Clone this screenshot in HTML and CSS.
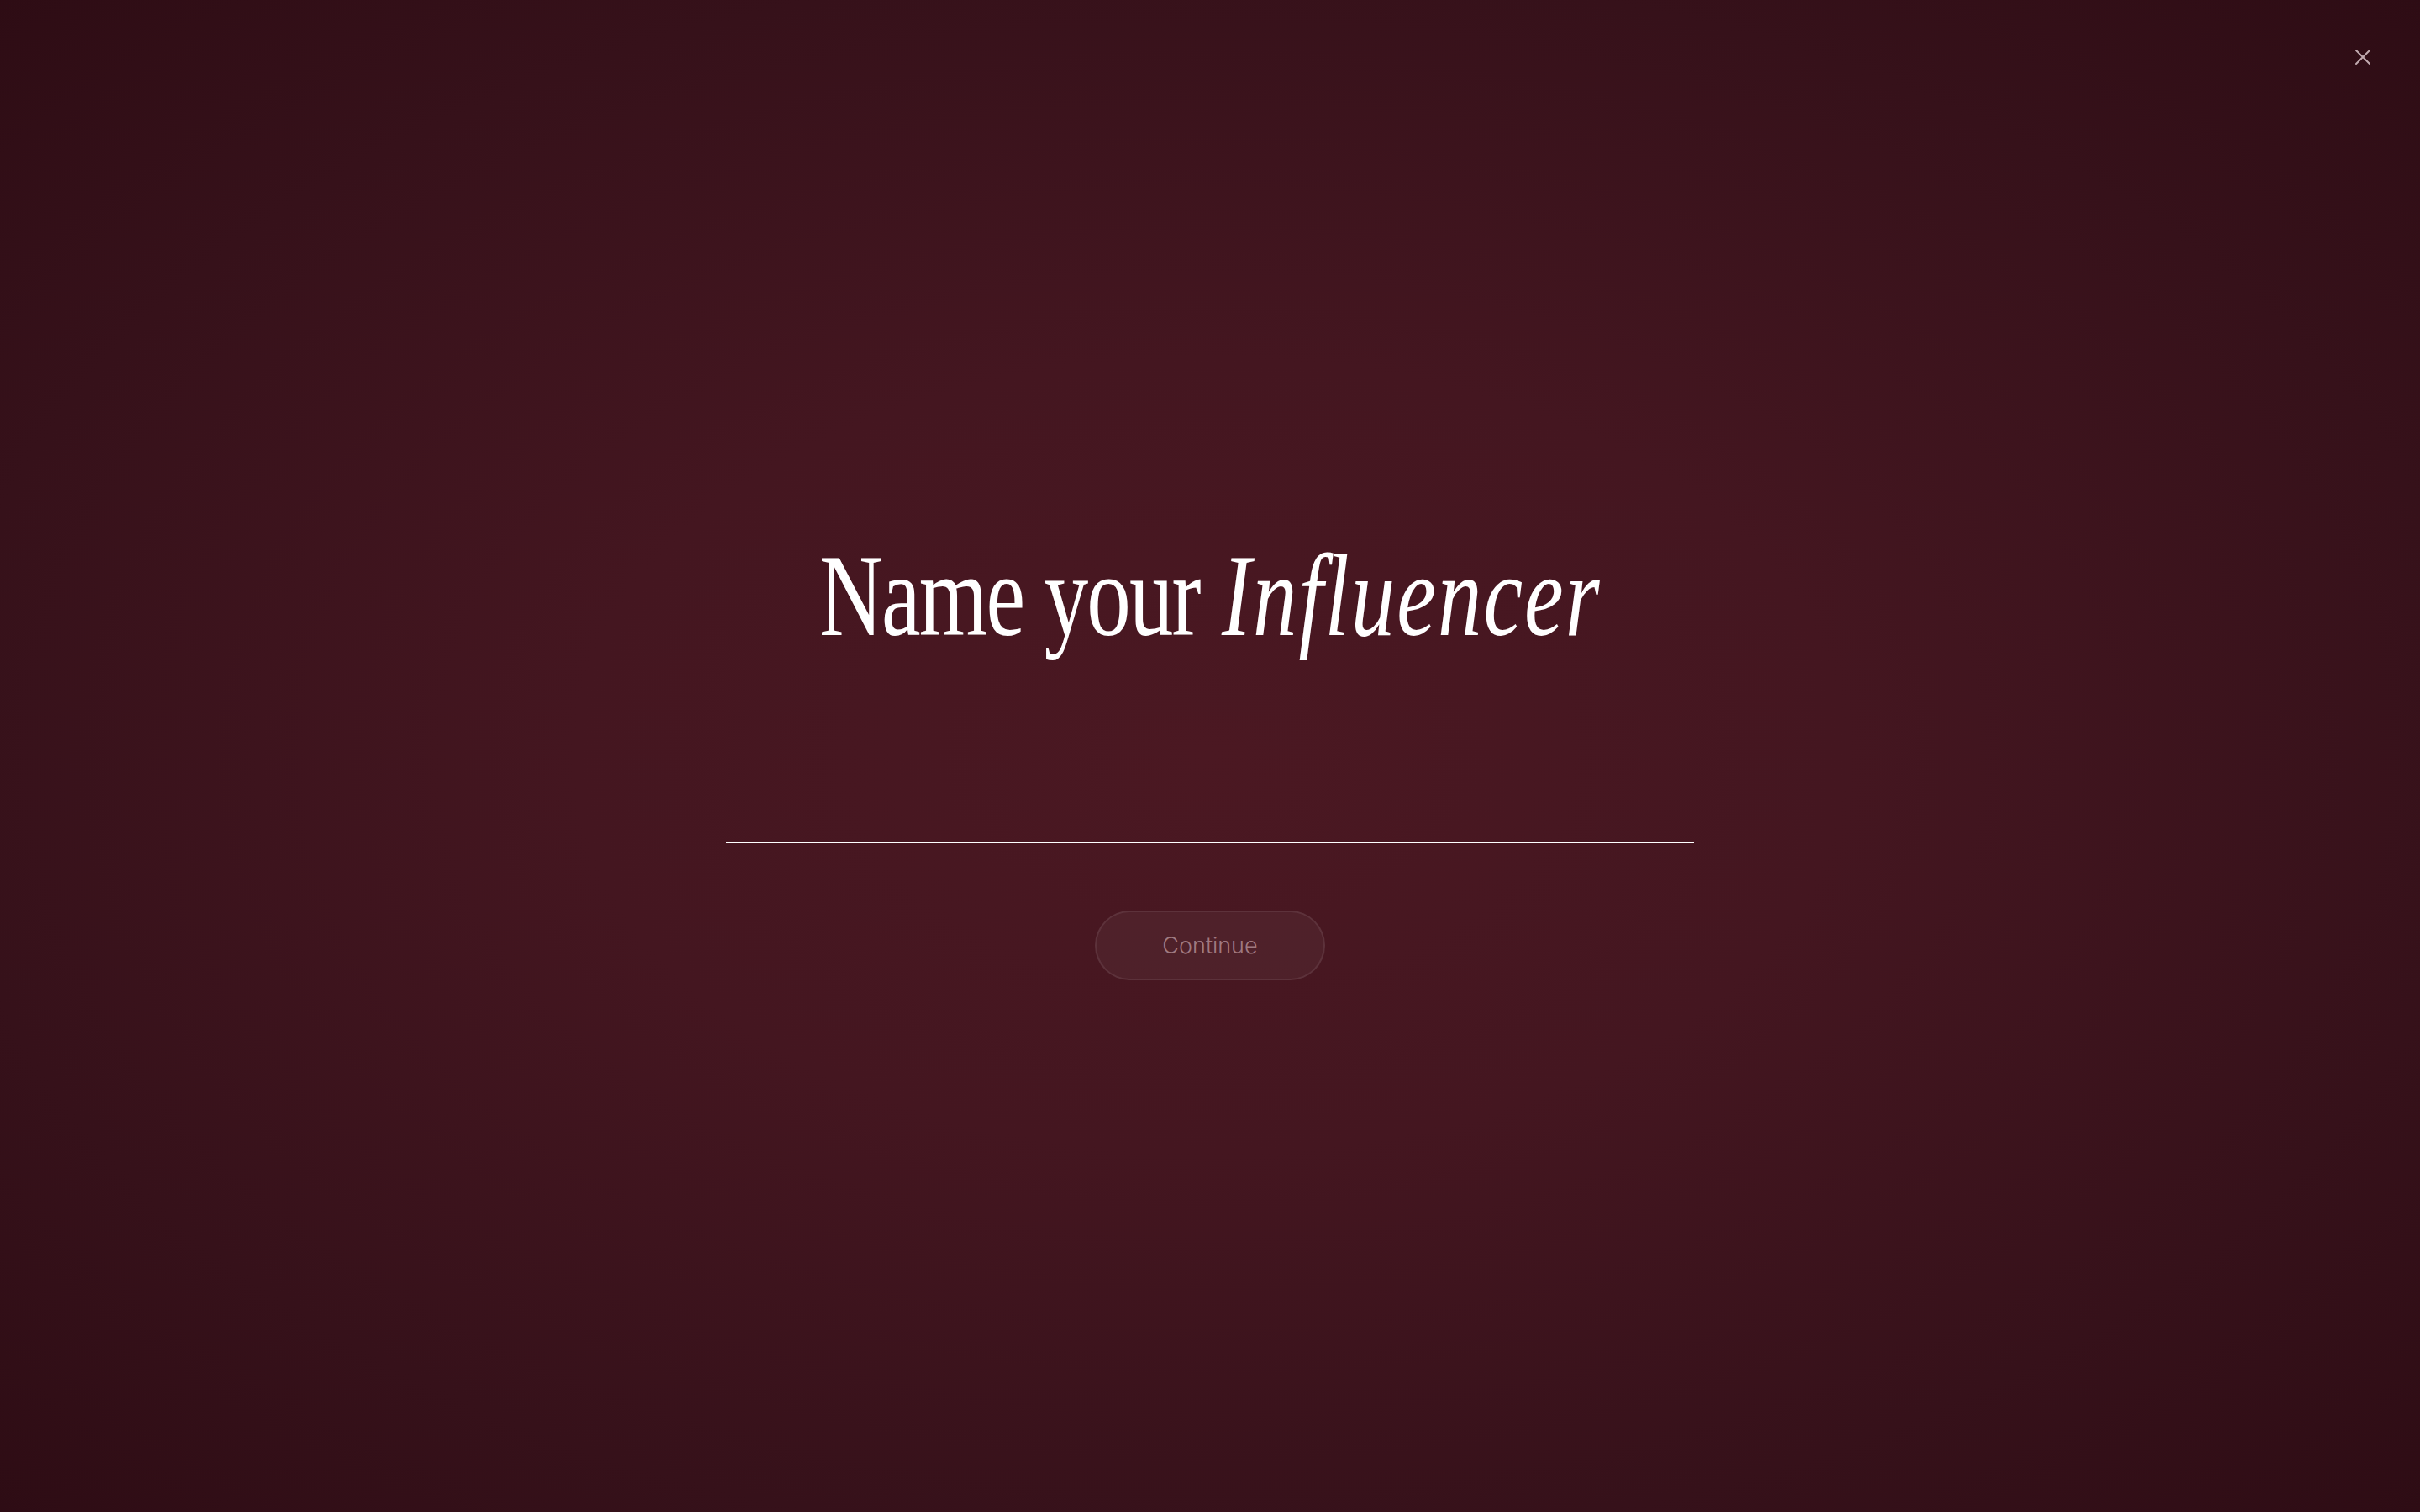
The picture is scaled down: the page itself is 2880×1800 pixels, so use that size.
FILE: index.html
```html
<!DOCTYPE html>
<html lang="en">
<head>
<meta charset="utf-8">
<title>Name your Influencer</title>
<link rel="stylesheet" href="styles.css">
</head>
<body>
<main class="screen">
  <button class="close" aria-label="Close">
    <svg viewBox="0 0 20 20" width="20" height="20"><path d="M2 2 L18 18 M18 2 L2 18" stroke="currentColor" stroke-width="2" stroke-linecap="round" fill="none"/></svg>
  </button>
  <section class="form">
    <h1 class="title"><span class="regular">Name your</span> <em class="italic">Influencer</em></h1>
    <input class="name-input" type="text" aria-label="Influencer name">
    <button class="continue">Continue</button>
  </section>
</main>
</body>
</html>
```
FILE: styles.css
```css
* { box-sizing: border-box; }
html, body { margin: 0; padding: 0; height: 100%; }
body {
  background: radial-gradient(ellipse 75% 75% at 50% 50%, #4b1822 0%, #441620 35%, #36111a 70%, #2c0b13 100%);
  font-family: "Inter", "Liberation Sans", sans-serif;
  overflow: hidden;
}
.screen {
  position: relative;
  width: 100%;
  height: 100%;
  display: flex;
  align-items: center;
  justify-content: center;
}
.close {
  position: absolute;
  top: 58px;
  right: 58px;
  width: 20px;
  height: 20px;
  padding: 0;
  border: 0;
  background: transparent;
  color: rgba(235, 215, 220, 0.78);
  display: flex;
}
.form {
  display: flex;
  flex-direction: column;
  align-items: center;
  padding-top: 6px;
}
.title {
  margin: 0;
  font-family: "Liberation Serif", "Times New Roman", serif;
  font-weight: 400;
  font-size: 140px;
  line-height: 140px;
  height: 140px;
  color: #ffffff;
  white-space: nowrap;
  transform: scaleX(0.75);
  transform-origin: 50% 50%;
}
.regular { letter-spacing: -2.5px; }
.italic { font-style: italic; letter-spacing: 2.7px; }
.name-input {
  margin-top: 103px;
  width: 1152px;
  height: 122px;
  background: transparent;
  border: 0;
  border-bottom: 2px solid #ffffff;
  outline: none;
  color: #ffffff;
  text-align: center;
  font-family: "Inter", sans-serif;
  font-size: 48px;
}
.continue {
  margin-top: 80px;
  width: 274px;
  height: 83px;
  border-radius: 42px;
  background: rgba(255, 255, 255, 0.045);
  border: 2px solid rgba(255, 255, 255, 0.08);
  color: rgba(230, 200, 206, 0.55);
  font-family: "Inter", sans-serif;
  font-weight: 300;
  font-size: 27px;
  padding: 0;
}
```
